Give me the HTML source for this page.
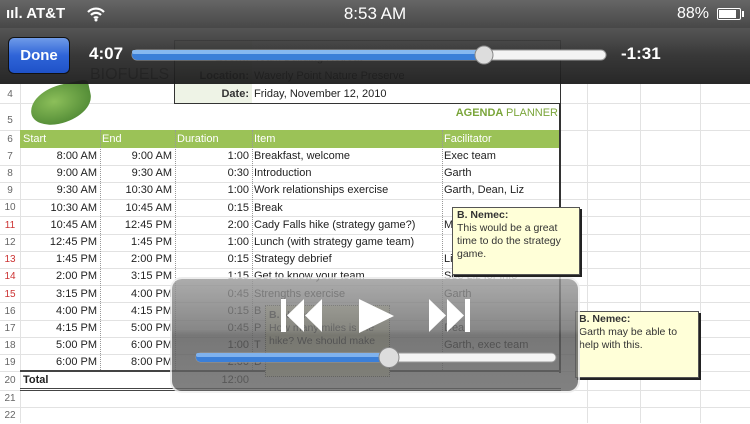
<!DOCTYPE html>
<html><head><meta charset="utf-8"><style>
*{margin:0;padding:0;box-sizing:border-box}
body{width:750px;height:423px;overflow:hidden;background:#fff;position:relative;font-family:"Liberation Sans",sans-serif}
.a{position:absolute}
.c{position:absolute;font-size:11px;color:#222;white-space:nowrap;line-height:17px}
.r{text-align:right}
.rn{position:absolute;left:0;width:20px;text-align:center;font-size:10px;color:#666;line-height:17px}
.hl{position:absolute;left:0;width:750px;height:1px;background:#e2e2e2}
.vl{position:absolute;top:84px;width:1px;height:339px;background:#e2e2e2}
.dl{position:absolute;width:0;border-left:1px dotted #999}
</style></head><body>
<div class="vl" style="left:20px"></div>
<div class="vl" style="left:587px"></div><div class="vl" style="left:640px"></div><div class="vl" style="left:700px"></div>
<div class="hl" style="top:103px"></div><div class="hl" style="top:130px"></div>
<div class="hl" style="top:165px"></div><div class="hl" style="top:182px"></div><div class="hl" style="top:199px"></div><div class="hl" style="top:216px"></div><div class="hl" style="top:234px"></div><div class="hl" style="top:251px"></div><div class="hl" style="top:268px"></div><div class="hl" style="top:285px"></div><div class="hl" style="top:302px"></div><div class="hl" style="top:320px"></div><div class="hl" style="top:337px"></div><div class="hl" style="top:354px"></div><div class="hl" style="top:371px"></div><div class="hl" style="top:390px"></div><div class="hl" style="top:407px"></div>
<div class="rn" style="top:86px">4</div><div class="rn" style="top:112px">5</div><div class="rn" style="top:131px">6</div>
<div class="rn" style="top:148px">7</div><div class="rn" style="top:165px">8</div><div class="rn" style="top:182px">9</div><div class="rn" style="top:199px">10</div><div class="rn" style="top:217px;color:#c33">11</div><div class="rn" style="top:234px">12</div><div class="rn" style="top:251px;color:#c33">13</div><div class="rn" style="top:268px;color:#c33">14</div><div class="rn" style="top:286px;color:#c33">15</div><div class="rn" style="top:303px">16</div><div class="rn" style="top:320px">17</div><div class="rn" style="top:337px">18</div><div class="rn" style="top:354px">19</div><div class="rn" style="top:372px">20</div><div class="rn" style="top:390px">21</div><div class="rn" style="top:407px">22</div>
<div class="a" style="left:30px;top:85px;width:62px;height:38px;background:radial-gradient(ellipse at 40% 40%,#8cbf5a,#3f7a2a);border-radius:60% 10% 60% 40%;transform:rotate(-12deg)"></div>
<div class="a" style="left:90px;top:66px;font-size:16px;color:#666">BIOFUELS</div>
<div class="a" style="left:174px;top:40px;width:387px;height:64px;border:1px solid #333;background:#fff"></div>
<div class="a" style="left:175px;top:41px;width:77px;height:62px;background:#eef3e6"></div>
<div class="c r" style="left:175px;width:74px;top:50px;font-weight:bold;color:#333">Event:</div>
<div class="c" style="left:254px;top:50px">Team Building Retreat</div>
<div class="c r" style="left:175px;width:74px;top:68px;font-weight:bold;color:#333">Location:</div>
<div class="c" style="left:254px;top:68px">Waverly Point Nature Preserve</div>
<div class="c r" style="left:175px;width:74px;top:86px;font-weight:bold;color:#333">Date:</div>
<div class="c" style="left:254px;top:86px">Friday, November 12, 2010</div>
<div class="c r" style="left:380px;width:178px;top:105px;font-weight:bold;color:#7aa53a;font-size:11px">AGENDA <span style="font-weight:normal">PLANNER</span></div>
<div class="a" style="left:20px;top:130px;width:540px;height:18px;background:#9bc257"></div>
<div class="c" style="left:23px;top:131px;color:#fff">Start</div><div class="c" style="left:102px;top:131px;color:#fff">End</div><div class="c" style="left:177px;top:131px;color:#fff">Duration</div><div class="c" style="left:254px;top:131px;color:#fff">Item</div><div class="c" style="left:444px;top:131px;color:#fff">Facilitator</div>
<div class="a" style="left:559px;top:103px;width:2px;height:270px;background:#333"></div>
<div class="dl" style="left:100px;top:130px;height:242px"></div><div class="dl" style="left:175px;top:130px;height:242px"></div><div class="dl" style="left:252px;top:130px;height:242px"></div><div class="dl" style="left:442px;top:130px;height:242px"></div>
<div class="c r" style="left:20px;width:77px;top:148px;line-height:17.2px">8:00 AM<br>9:00 AM<br>9:30 AM<br>10:30 AM<br>10:45 AM<br>12:45 PM<br>1:45 PM<br>2:00 PM<br>3:15 PM<br>4:00 PM<br>4:15 PM<br>5:00 PM<br>6:00 PM</div>
<div class="c r" style="left:100px;width:72px;top:148px;line-height:17.2px">9:00 AM<br>9:30 AM<br>10:30 AM<br>10:45 AM<br>12:45 PM<br>1:45 PM<br>2:00 PM<br>3:15 PM<br>4:00 PM<br>4:15 PM<br>5:00 PM<br>6:00 PM<br>8:00 PM</div>
<div class="c r" style="left:175px;width:74px;top:148px;line-height:17.2px">1:00<br>0:30<br>1:00<br>0:15<br>2:00<br>1:00<br>0:15<br>1:15<br>0:45<br>0:15<br>0:45<br>1:00<br>2:00</div>
<div class="c" style="left:254px;top:148px;line-height:17.2px">Breakfast, welcome<br>Introduction<br>Work relationships exercise<br>Break<br>Cady Falls hike (strategy game?)<br>Lunch (with strategy game team)<br>Strategy debrief<br>Get to know your team<br>Strengths exercise<br>B<br>P<br>T<br>D</div>
<div class="c" style="left:444px;top:148px;line-height:17.2px">Exec team<br>Garth<br>Garth, Dean, Liz<br><br>M<br><br>Li<br>See Liz for info<br>Garth<br><br>Dean<br>Garth, exec team</div>
<div class="a" style="left:20px;top:370px;width:541px;height:2px;background:#444"></div>
<div class="c" style="left:23px;top:372px;font-weight:bold">Total</div>
<div class="c r" style="left:175px;width:74px;top:372px">12:00</div>
<div class="a" style="left:20px;top:388px;width:541px;height:3px;border-top:1px solid #444;border-bottom:1px solid #444"></div>
<div class="a" style="left:452px;top:207px;width:128px;height:68px;background:#ffffd8;border:1px solid #555;box-shadow:2px 2px 0 #222;padding:1px 4px;font-size:10.5px;line-height:13px;color:#333"><b>B. Nemec:</b><br>This would be a great time to do the strategy game.</div>
<div class="a" style="left:575px;top:311px;width:124px;height:67px;background:#ffffd8;border:1px solid #555;box-shadow:2px 2px 0 #222;padding:1px 3px;font-size:10.5px;line-height:13px;color:#333"><b>B. Nemec:</b><br>Garth may be able to help with this.</div>
<div class="a" style="left:265px;top:305px;width:125px;height:72px;background:#ffffd8;border:1px dotted #666;padding:3px 3px;font-size:10.5px;line-height:13px;color:#333"><b>B. Nemec:</b><br>How many miles is the hike? We should make</div>
<div class="a" style="left:170px;top:277px;width:410px;height:116px;border-radius:12px;border:2px solid rgba(255,255,255,.85);background:linear-gradient(#9a9a9a 0%,#6e6e6e 45%,#5a5a5a 50%,#666 100%);opacity:.82"></div>
<svg class="a" style="left:170px;top:277px" width="410" height="116">
<g fill="#fff">
<rect x="111" y="22" width="5" height="33"/><polygon points="134,22 117,38.5 134,55"/><polygon points="152,22 135,38.5 152,55"/>
<polygon points="189,22 189,56 224,39"/>
<polygon points="259,22 276,38.5 259,55"/><polygon points="277,22 294,38.5 277,55"/><rect x="295" y="22" width="5" height="33"/>
</g>
<rect x="26" y="76" width="360" height="9" rx="4.5" fill="#f4f4f4" stroke="#999"/>
<rect x="26" y="76" width="194" height="9" rx="4.5" fill="#3b7fd8"/>
<rect x="26" y="76" width="194" height="4" rx="2" fill="#7fb2ee"/>
<circle cx="219" cy="80.5" r="10" fill="#ddd" stroke="#888"/>
</svg>
<div class="a" style="left:0;top:0;width:750px;height:28px;background:linear-gradient(#5a5a5a,#3a3a3a);opacity:.93"></div>
<div class="a" style="left:0;top:28px;width:750px;height:56px;background:linear-gradient(#4a4a4a,#2b2b2b 50%,#1a1a1a);opacity:.94"></div>
<div class="a" style="left:6px;top:5px;font-size:15px;color:#fff;font-weight:bold">ııl. AT&amp;T</div>
<svg class="a" style="left:86px;top:6px" width="20" height="16"><path d="M2 6a11 11 0 0 1 16 0M5 9a7 7 0 0 1 10 0M8 12a3 3 0 0 1 4 0" stroke="#fff" stroke-width="2.2" fill="none"/><circle cx="10" cy="14" r="1.5" fill="#fff"/></svg>
<div class="a" style="left:0;width:750px;top:4px;text-align:center;font-size:17px;color:#fff">8:53 AM</div>
<div class="a" style="left:677px;top:5px;font-size:16px;color:#fff">88%</div>
<div class="a" style="left:717px;top:8px;width:24px;height:12px;border:1.5px solid #fff;border-radius:2px;padding:1px"><div style="width:85%;height:100%;background:#fff"></div></div>
<div class="a" style="left:742px;top:11px;width:2px;height:6px;background:#fff"></div>
<div class="a" style="left:8px;top:37px;width:62px;height:37px;border-radius:6px;background:linear-gradient(#6f9be8,#2f64d8 50%,#1f52c8);border:1px solid #111;color:#fff;font-weight:bold;font-size:15px;text-align:center;line-height:35px">Done</div>
<div class="a" style="left:89px;top:44px;color:#fff;font-weight:bold;font-size:17px">4:07</div>
<div class="a" style="left:621px;top:44px;color:#fff;font-weight:bold;font-size:17px">-1:31</div>
<svg class="a" style="left:130px;top:44px" width="480" height="22">
<rect x="2" y="6" width="474" height="10" rx="5" fill="#f4f4f4" stroke="#999"/>
<rect x="2" y="6" width="352" height="10" rx="5" fill="#3b7fd8"/>
<rect x="2" y="6" width="352" height="4" rx="2" fill="#86b8f0"/>
<circle cx="354" cy="11" r="9" fill="#ddd" stroke="#888"/>
</svg>
</body></html>
